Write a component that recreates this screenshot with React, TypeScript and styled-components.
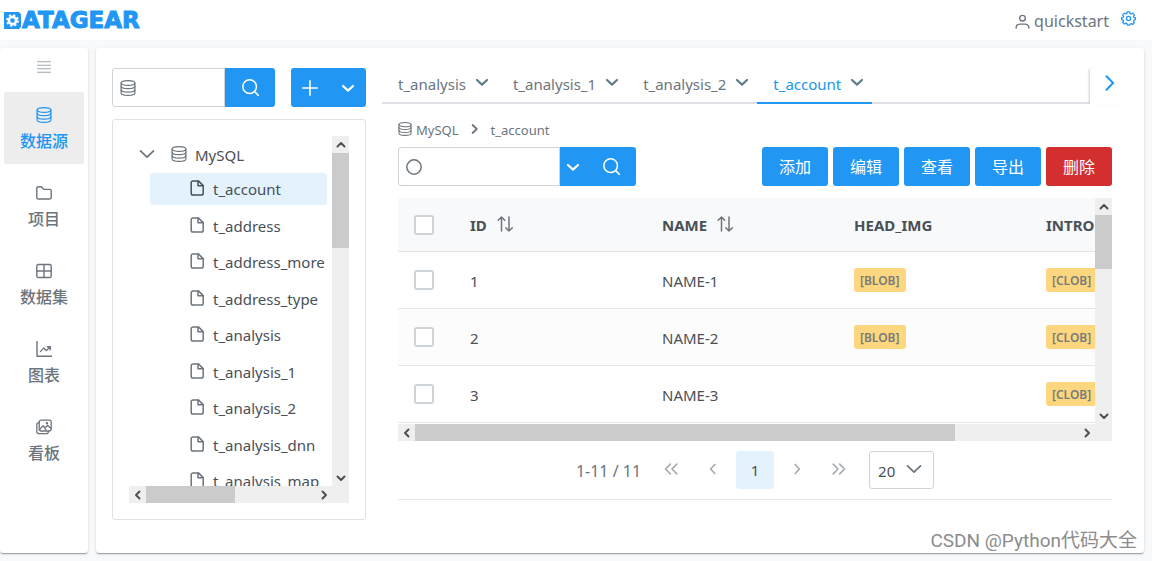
import React from 'react';
import styled, { createGlobalStyle, css } from 'styled-components';

const blue = '#2196f3';
const text = '#495057';
const muted = '#6c757d';
const line = '#dee2e6';
const field = '#ced4da';

const GlobalStyle = createGlobalStyle`
  *, *::before, *::after { box-sizing: border-box; }
  body {
    margin: 0;
    background: #f8f9fb;
    color: ${text};
    font: 15px/20px "Noto Sans", "Noto Sans CJK SC", sans-serif;
  }
  button, input, select { font: inherit; color: inherit; }
  button { border: 0; padding: 0; background: none; cursor: pointer; }
  ul, ol { list-style: none; margin: 0; padding: 0; }
  a { color: inherit; text-decoration: none; }
`;

/* ---------- icons ---------- */

const Svg = styled.svg`
  display: block;
  flex: none;
  fill: none;
  stroke: currentColor;
  stroke-linecap: round;
  stroke-linejoin: round;
`;

type IconProps = { size?: number; weight?: number };

const icon = (body: React.ReactNode, defaultWeight = 1.2) =>
  ({ size = 16, weight = defaultWeight }: IconProps) => (
    <Svg width={size} height={size} viewBox="0 0 16 16" strokeWidth={weight} aria-hidden="true">
      {body}
    </Svg>
  );

const DatabaseIcon = icon(
  <>
    <ellipse cx="8" cy="3" rx="6.900" ry="2.400" />
    <path d="M1.100 3v9.900c0 1.300 3.100 2.400 6.900 2.400s6.900-1.100 6.900-2.400V3" />
    <path d="M1.100 6c0 1.500 3.100 2.600 6.900 2.600s6.900-1.100 6.900-2.600M1.100 9.500c0 1.500 3.100 2.600 6.900 2.600s6.900-1.100 6.900-2.600" />
  </>,
);
const FolderIcon = icon(
  <path d="M.8 12.600V3.200c0-.8.6-1.400 1.400-1.400h3.300l2.300 2.600h6c.8 0 1.400.6 1.400 1.400v6.800c0 .8-.6 1.400-1.400 1.400H2.200c-.8 0-1.400-.6-1.400-1.400z" />, 1.4,
);
const GridIcon = icon(<><rect x=".8" y="1.500" width="14.400" height="13" rx="1.600" /><path d="M8 1.500v13M.8 8h14.400" /></>, 1.4);
const ChartIcon = icon(<><path d="M1 .6v14.600h14.600" /><path d="M4.400 10.600l3.200-3.500 2.800 2.500L14.200 6M11.300 5.800h3v3" /></>, 1.4);
const ImagesIcon = icon(
  <>
    <rect x="3.200" y="1.200" width="12" height="10.800" rx="1.800" />
    <path d="M3 3.600C1.500 3.700.8 4.500.8 5.800v6.400c0 1.600.9 2.500 2.500 2.500h7c1.300 0 2.100-.7 2.300-2.500" />
    <path d="M3.400 10.800l3.700-4.200 3 4.400M8.600 8.800l3-2.400 3.500 3.200" />
    <circle cx="11" cy="4.300" r=".6" />
  </>, 1.3,
);
const SearchIcon = icon(<><circle cx="7.200" cy="7.200" r="6.400" /><path d="M11.900 11.900l3.500 3.500" /></>, 1.4);
const PlusIcon = icon(<path d="M8 .8v14.400M.8 8h14.400" />, 1.6);
const CaretIcon = icon(<path d="M3 6l5 4.600L13 6" />, 2.2);
const ChevronDownIcon = icon(<path d="M1.500 4.800L8 11.200l6.500-6.400" />, 1.7);
const ChevronRightIcon = icon(<path d="M5.500 1.200L12.100 8 5.500 14.800" />, 2);
const CrumbIcon = icon(<path d="M5.600 4l4.200 4-4.200 4" />, 1.8);
const FileIcon = icon(
  <><path d="M4 .9h5.400l4.800 4.700v7.700c0 1-.7 1.800-1.800 1.800H4c-1 0-1.800-.7-1.800-1.800V2.700C2.200 1.700 3 .9 4 .9z" /><path d="M9 1.200v4.600h5" /></>, 1.5,
);
const CircleIcon = icon(<circle cx="8" cy="8" r="7.200" />, 1.5);
const SortIcon = icon(<path d="M4.500 15V1M1.200 4.200L4.500 1l3.200 3.200M12 1v14M8.800 11.800L12 15l3.300-3.200" />, 1.5);
const UserIcon = icon(<><circle cx="8" cy="4.500" r="3" /><path d="M1.200 15c0-2.900 2-4.200 4.200-4.200h5.200c2.200 0 4.200 1.300 4.200 4.200" /></>, 1.5);
const BarsIcon = icon(<path d="M.5 2h15M.5 6h15M.5 10h15M.5 14h15" />, 1.1);
const AngleLeftIcon = icon(<path d="M9.800 3.500L5.600 8l4.200 4.500" />, 1.7);
const AngleRightIcon = icon(<path d="M6.200 3.500L10.400 8l-4.200 4.500" />, 1.7);
const AnglesLeftIcon = icon(<path d="M7.300 3.200L2.500 8l4.800 4.800M13.800 3.200L9 8l4.800 4.800" />, 1.7);
const AnglesRightIcon = icon(<path d="M2.200 3.200L7 8l-4.800 4.800M8.700 3.200L13.500 8l-4.800 4.800" />, 1.7);
const GearIcon = icon(
  <>
    <path d="M6.700 1h2.600l.4 1.700 1.100.5 1.600-.9 1.800 1.800-.9 1.500.5 1.200 1.600.4v1.900l-1.600.9-.5 1.100.9 1.500-1.800 1.800-1.600-.9-1.100.5L9.300 15H6.700l-.4-1.500-1.100-.5-1.600.9-1.800-1.800.9-1.500-.5-1.100L.7 9.100V7.200l1.500-.4.5-1.200-.9-1.500 1.800-1.800 1.600.9 1.100-.5z" />
    <circle cx="8" cy="8" r="2.200" />
  </>, 1.4,
);

/* ---------- page frame ---------- */

const Page = styled.div`
  display: flex;
  flex-direction: column;
  height: 100vh;
  min-height: 480px;
`;

const Header = styled.header`
  display: flex;
  align-items: center;
  justify-content: space-between;
  height: 40px;
  flex: none;
  padding: 0 16px 0 4px;
  background: #fff;
`;

const Logo = styled.a`
  && { color: ${blue}; }
  display: flex;
  align-items: center;
  gap: 1px;
  font: bold 23px/24px "DejaVu Sans", sans-serif;
  -webkit-text-stroke: 1px ${blue};
`;

const UserArea = styled.div`
  display: flex;
  align-items: center;
  gap: 12px;
  color: ${muted};
`;

const UserName = styled.span`
  display: flex;
  align-items: center;
  gap: 4px;
  padding-top: 2px;
  font-size: 16px;
`;

const GearButton = styled.button`
  color: ${blue};
  padding-bottom: 3px;
`;

const Body = styled.div`
  display: flex;
  flex: 1;
  min-height: 0;
  gap: 8px;
  padding: 8px 8px 8px 0;
`;

const cardStyle = css`
  background: #fff;
  border-radius: 3px;
  box-shadow: 0 2px 1px -1px rgba(0, 0, 0, 0.2), 0 1px 1px rgba(0, 0, 0, 0.14),
    0 1px 3px rgba(0, 0, 0, 0.12);
`;

const Sidebar = styled.nav`
  ${cardStyle}
  flex: none;
  width: 88px;
  padding: 12px 4px;
`;

const MenuToggle = styled.button`
  display: flex;
  justify-content: center;
  width: 100%;
  height: 14px;
  margin-bottom: 18px;
  color: #9aa5ab;
`;

const NavList = styled.ul`
  display: flex;
  flex-direction: column;
  gap: 6px;
`;

const NavLink = styled.a<{ $active?: boolean }>`
  && { color: ${(p) => (p.$active ? blue : muted)}; }
  display: flex;
  flex-direction: column;
  align-items: center;
  gap: 8px;
  height: 72px;
  padding-top: 15px;
  border-radius: 3px;
  background: ${(p) => (p.$active ? '#ededed' : 'transparent')};
  font-size: 16px;
  font-weight: 500;
`;

const Main = styled.main`
  ${cardStyle}
  display: flex;
  flex: 1;
  min-width: 0;
  gap: 16px;
  padding: 20px 16px 33px;
`;

/* ---------- shared controls ---------- */

const Field = styled.label<{ $grow?: boolean }>`
  display: flex;
  align-items: center;
  flex: ${(p) => (p.$grow ? '1' : 'none')};
  width: ${(p) => (p.$grow ? 'auto' : '162px')};
  min-width: 0;
  height: 39px;
  padding-left: 7px;
  border: 1px solid ${field};
  border-radius: 3px 0 0 3px;
  color: ${muted};
`;

const TextInput = styled.input`
  flex: 1;
  min-width: 0;
  height: 100%;
  padding: 0 8px;
  border: 0;
  outline: 0;
  background: none;
`;

const ButtonGroup = styled.div`
  display: flex;
  flex: none;
  overflow: hidden;
  border-radius: 3px;
`;

const JoinedGroup = styled(ButtonGroup)`
  border-radius: 0 3px 3px 0;
`;

const IconButton = styled.button<{ $width: number }>`
  display: flex;
  align-items: center;
  justify-content: center;
  width: ${(p) => p.$width}px;
  height: 39px;
  background: ${blue};
  color: #fff;
`;

const ActionButton = styled.button<{ $danger?: boolean }>`
  width: 66px;
  height: 39px;
  border-radius: 3px;
  background: ${(p) => (p.$danger ? '#d32f2f' : blue)};
  color: #fff;
  font-size: 16px;
`;

/* ---------- scrolling panes ---------- */

const ScrollGrid = styled.div`
  display: grid;
  grid-template-columns: minmax(0, 1fr) 17px;
  grid-template-rows: minmax(0, 1fr) 17px;
  min-height: 0;
`;

const Viewport = styled.div`
  overflow: hidden;
`;

const Track = styled.div<{ $vertical?: boolean }>`
  display: flex;
  flex-direction: ${(p) => (p.$vertical ? 'column' : 'row')};
  background: #efefef;
  color: #505050;
`;

const ArrowButton = styled.button<{ $end?: boolean; $vertical?: boolean }>`
  display: flex;
  align-items: center;
  justify-content: center;
  flex: none;
  width: 17px;
  height: 17px;
  ${(p) => p.$end && (p.$vertical ? 'margin-top: auto;' : 'margin-left: auto;')}
`;

const Thumb = styled.div<{ $share: number }>`
  flex: 0 0 ${(p) => p.$share}%;
  background: #cbcbcb;
`;

const Corner = styled.div`
  background: #efefef;
`;

const arrows = {
  up: 'M1.500 6.500L5 3l3.500 3.500',
  down: 'M1.500 3.500L5 7l3.500-3.500',
  left: 'M6.500 1.500L3 5l3.500 3.500',
  right: 'M3.500 1.500L7 5 3.500 8.500',
};

const Arrow = ({ dir }: { dir: keyof typeof arrows }) => (
  <Svg width="10" height="10" viewBox="0 0 10 10" strokeWidth="2" aria-hidden="true">
    <path d={arrows[dir]} />
  </Svg>
);

function ScrollPane({ v, h, children }: { v: number; h: number; children: React.ReactNode }) {
  return (
    <>
      <Viewport>{children}</Viewport>
      <Track $vertical>
        <ArrowButton aria-label="up"><Arrow dir="up" /></ArrowButton>
        <Thumb $share={v} />
        <ArrowButton $end $vertical aria-label="down"><Arrow dir="down" /></ArrowButton>
      </Track>
      <Track>
        <ArrowButton aria-label="left"><Arrow dir="left" /></ArrowButton>
        <Thumb $share={h} />
        <ArrowButton $end aria-label="right"><Arrow dir="right" /></ArrowButton>
      </Track>
      <Corner />
    </>
  );
}

/* ---------- schema tree ---------- */

const TreeColumn = styled.section`
  display: flex;
  flex-direction: column;
  flex: none;
  width: 25%;
  gap: 12px;
  min-width: 0;
  min-height: 0;
`;

const TreeTools = styled.div`
  display: flex;
  gap: 16px;
`;

const SearchBox = styled.form`
  display: flex;
  flex: 1;
  min-width: 0;
`;

const TreeScroll = styled(ScrollGrid)`
  flex: 1;
  border: 1px solid ${line};
  border-radius: 3px;
  padding: 16px;
`;

const TreeRoot = styled.button`
  display: flex;
  align-items: center;
  width: 100%;
  height: 37px;
  padding: 0 10px 2px;
  color: ${muted};
`;

const RootLabel = styled.span`
  padding-top: 3px;
  margin-left: 8px;
  color: ${text};
`;

const RootIcon = styled.span`
  margin-left: 16px;
`;

const TreeItems = styled.ul`
  padding: 0 5px 0 21px;
`;

const TreeItem = styled.li`
  margin-bottom: 5px;
  &:nth-child(even) { margin-bottom: 4px; }
`;

const TreeNode = styled.button<{ $active?: boolean }>`
  display: flex;
  align-items: center;
  gap: 8px;
  width: 100%;
  height: 32px;
  padding-left: 39px;
  border-radius: 3px;
  background: ${(p) => (p.$active ? '#e3f2fd' : 'transparent')};
  white-space: nowrap;
  svg { color: ${(p) => (p.$active ? text : muted)}; margin-bottom: 2px; }
`;

/* ---------- tabs and breadcrumb ---------- */

const Work = styled.section`
  display: flex;
  flex-direction: column;
  flex: 1;
  min-width: 0;
`;

const TabBar = styled.div`
  display: flex;
  height: 36px;
`;

const Tabs = styled.div`
  display: flex;
  flex: 1;
  min-width: 0;
  overflow: hidden;
  box-shadow: inset 0 -2px 0 ${line};
`;

const Tab = styled.div<{ $active?: boolean }>`
  display: flex;
  align-items: center;
  gap: 8px;
  padding: 0 7px 2px 16px;
  border-bottom: 2px solid ${(p) => (p.$active ? blue : 'transparent')};
  color: ${(p) => (p.$active ? blue : muted)};
`;

const TabMenu = styled.button`
  color: #607d8b;
  padding-bottom: 4px;
`;

const TabNext = styled.button`
  display: flex;
  align-items: center;
  justify-content: center;
  width: 38px;
  padding-bottom: 6px;
  color: ${blue};
  box-shadow: -2px 0 2px -1px rgba(0, 0, 0, 0.2);
`;

const Content = styled.div`
  display: flex;
  flex-direction: column;
  padding: 16px 16px 0;
`;

const Crumbs = styled.ol`
  display: flex;
  align-items: center;
  height: 20px;
  color: ${muted};
  font-size: 13px;
`;

const Crumb = styled.li`
  display: flex;
  align-items: center;
  gap: 4px;
  svg { margin-bottom: 2px; }
`;

const CrumbDivider = styled.li`
  margin: 0 8px 2px;
`;

const Toolbar = styled.div`
  display: flex;
  justify-content: space-between;
  margin: 7px 0 12px;
`;

const Query = styled.form`
  display: flex;
`;

const Actions = styled.div`
  display: flex;
  gap: 5px;
`;

/* ---------- data table ---------- */

const TableScroll = styled(ScrollGrid)`
  height: 243px;
`;

const Table = styled.table`
  width: 1016px;
  table-layout: fixed;
  border-collapse: separate;
  border-spacing: 0;
  text-align: left;
`;

const Check = styled.input`
  appearance: none;
  display: block;
  width: 20px;
  height: 20px;
  margin: 0 0 2px;
  border: 2px solid ${field};
  border-radius: 3px;
  background: #fff;
`;

const Th = styled.th<{ $width: number }>`
  width: ${(p) => p.$width}px;
  height: 54px;
  padding: 0 16px;
  border-bottom: 1px solid #e4e7ea;
  background: #f8f9fa;
  font-weight: 700;
  ${Check} { margin: 0; }
`;

const ThInner = styled.span`
  display: flex;
  align-items: center;
  gap: 10px;
  svg { color: ${muted}; margin-bottom: 2px; }
`;

const Row = styled.tr`
  &:nth-child(even) td { background: #fcfcfc; }
`;

const Td = styled.td`
  height: 57px;
  padding: 2px 16px 0;
  border-bottom: 1px solid #e4e7ea;
`;

const Tag = styled.span`
  display: flex;
  align-items: center;
  width: 52px;
  height: 24px;
  margin-bottom: 2px;
  padding: 2px 0 0 6px;
  border-radius: 3px;
  background: #fcd77f;
  color: #7b7b78;
  font-size: 12px;
  font-weight: 600;
  white-space: nowrap;
`;

/* ---------- paginator ---------- */

const Paginator = styled.nav`
  display: flex;
  align-items: center;
  justify-content: center;
  gap: 4px;
  height: 59px;
  border-bottom: 1px solid #e4e7ea;
  color: ${muted};
`;

const Range = styled.span`
  margin-right: 7px;
  padding-top: 2px;
  font-size: 16px;
`;

const PageButton = styled.button<{ $active?: boolean }>`
  display: flex;
  align-items: center;
  justify-content: center;
  width: 38px;
  height: 38px;
  border-radius: 3px;
  background: ${(p) => (p.$active ? '#e3f2fd' : 'transparent')};
  color: ${(p) => (p.$active ? text : '#a7acb1')};
  padding-bottom: ${(p) => (p.$active ? '0' : '3px')};
`;

const SizeBox = styled.label`
  display: flex;
  align-items: center;
  width: 65px;
  height: 38px;
  margin-left: 7px;
  border: 1px solid ${field};
  border-radius: 3px;
  svg { pointer-events: none; margin: 0 11px 3px 0; }
`;

const SizeSelect = styled.select`
  appearance: none;
  flex: 1;
  min-width: 0;
  height: 100%;
  padding: 2px 0 0 8px;
  border: 0;
  outline: 0;
  background: none;
  color: ${text};
`;

const Watermark = styled.div`
  position: absolute;
  right: 15px;
  bottom: 8px;
  color: #8c8c8c;
  font: 400 19px/24px Roboto, "Noto Sans CJK SC", sans-serif;
  text-shadow: 1px 1px 1px #fff;
  pointer-events: none;
`;

/* ---------- data ---------- */

const navItems = [
  { label: '数据源', Icon: DatabaseIcon, active: true },
  { label: '项目', Icon: FolderIcon },
  { label: '数据集', Icon: GridIcon },
  { label: '图表', Icon: ChartIcon },
  { label: '看板', Icon: ImagesIcon },
];

const tables = [
  't_account', 't_address', 't_address_more', 't_address_type', 't_analysis',
  't_analysis_1', 't_analysis_2', 't_analysis_dnn', 't_analysis_map',
];

const tabs = ['t_analysis', 't_analysis_1', 't_analysis_2', 't_account'];

const rows = [
  { id: 1, name: 'NAME-1', blob: true },
  { id: 2, name: 'NAME-2', blob: true },
  { id: 3, name: 'NAME-3', blob: false },
];

const actions = ['添加', '编辑', '查看', '导出'];

export default function App() {
  return (
    <>
      <GlobalStyle />
      <Page>
        <Header>
          <Logo href="#" aria-label="DATAGEAR">
            <svg width="17" height="17" viewBox="0 0 16 16" aria-hidden="true">
              <path d="M0 0h14l2 2v12l-2 2H0z" fill={blue} />
              <circle cx="8" cy="8" r="3.400" fill="none" stroke="#fff" strokeWidth="2.400" />
              <circle cx="8" cy="8" r="5.200" fill="none" stroke="#fff" strokeWidth="1.600" strokeDasharray="2.042 2.042" />
            </svg>
            ATAGEAR
          </Logo>
          <UserArea>
            <UserName><UserIcon size={15} />quickstart</UserName>
            <GearButton aria-label="settings"><GearIcon size={15} /></GearButton>
          </UserArea>
        </Header>

        <Body>
          <Sidebar>
            <MenuToggle aria-label="menu"><BarsIcon size={14} /></MenuToggle>
            <NavList>
              {navItems.map(({ label, Icon, active }) => (
                <li key={label}>
                  <NavLink href="#" $active={active}><Icon size={16} />{label}</NavLink>
                </li>
              ))}
            </NavList>
          </Sidebar>

          <Main>
            <TreeColumn>
              <TreeTools>
                <SearchBox>
                  <Field $grow>
                    <DatabaseIcon />
                    <TextInput aria-label="search" />
                  </Field>
                  <JoinedGroup>
                    <IconButton $width={50} type="button" aria-label="search"><SearchIcon size={17} /></IconButton>
                  </JoinedGroup>
                </SearchBox>
                <ButtonGroup>
                  <IconButton $width={38} aria-label="add"><PlusIcon /></IconButton>
                  <IconButton $width={37} aria-label="more"><CaretIcon /></IconButton>
                </ButtonGroup>
              </TreeTools>
              <TreeScroll>
                <ScrollPane v={27} h={44}>
                  <TreeRoot>
                    <ChevronDownIcon />
                    <RootIcon><DatabaseIcon /></RootIcon>
                    <RootLabel>MySQL</RootLabel>
                  </TreeRoot>
                  <TreeItems>
                    {tables.map((name, i) => (
                      <TreeItem key={name}>
                        <TreeNode $active={i === 0}><FileIcon />{name}</TreeNode>
                      </TreeItem>
                    ))}
                  </TreeItems>
                </ScrollPane>
              </TreeScroll>
            </TreeColumn>

            <Work>
              <TabBar>
                <Tabs>
                  {tabs.map((name) => (
                    <Tab key={name} $active={name === 't_account'}>
                      <span>{name}</span>
                      <TabMenu aria-label={name}><CaretIcon /></TabMenu>
                    </Tab>
                  ))}
                </Tabs>
                <TabNext aria-label="next"><ChevronRightIcon /></TabNext>
              </TabBar>

              <Content>
                <Crumbs>
                  <Crumb><DatabaseIcon size={14} />MySQL</Crumb>
                  <CrumbDivider><CrumbIcon /></CrumbDivider>
                  <Crumb>t_account</Crumb>
                </Crumbs>

                <Toolbar>
                  <Query>
                    <Field>
                      <CircleIcon />
                      <TextInput aria-label="query" />
                    </Field>
                    <JoinedGroup>
                      <IconButton $width={26} type="button" aria-label="options"><CaretIcon /></IconButton>
                      <IconButton $width={50} type="button" aria-label="query"><SearchIcon size={17} /></IconButton>
                    </JoinedGroup>
                  </Query>
                  <Actions>
                    {actions.map((label) => <ActionButton key={label}>{label}</ActionButton>)}
                    <ActionButton $danger>删除</ActionButton>
                  </Actions>
                </Toolbar>

                <TableScroll>
                  <ScrollPane v={24} h={77.5}>
                    <Table>
                      <thead>
                        <tr>
                          <Th $width={56}><Check type="checkbox" aria-label="all" /></Th>
                          <Th $width={192}><ThInner>ID<SortIcon /></ThInner></Th>
                          <Th $width={192}><ThInner>NAME<SortIcon /></ThInner></Th>
                          <Th $width={192}>HEAD_IMG</Th>
                          <Th $width={384}>INTRO</Th>
                        </tr>
                      </thead>
                      <tbody>
                        {rows.map((row) => (
                          <Row key={row.id}>
                            <Td><Check type="checkbox" aria-label={row.name} /></Td>
                            <Td>{row.id}</Td>
                            <Td>{row.name}</Td>
                            <Td>{row.blob && <Tag>[BLOB]</Tag>}</Td>
                            <Td><Tag>[CLOB]</Tag></Td>
                          </Row>
                        ))}
                      </tbody>
                    </Table>
                  </ScrollPane>
                </TableScroll>

                <Paginator>
                  <Range>1-11 / 11</Range>
                  <PageButton aria-label="first"><AnglesLeftIcon /></PageButton>
                  <PageButton aria-label="previous"><AngleLeftIcon /></PageButton>
                  <PageButton $active>1</PageButton>
                  <PageButton aria-label="next"><AngleRightIcon /></PageButton>
                  <PageButton aria-label="last"><AnglesRightIcon /></PageButton>
                  <SizeBox>
                    <SizeSelect aria-label="rows"><option>20</option></SizeSelect>
                    <ChevronDownIcon />
                  </SizeBox>
                </Paginator>
              </Content>
            </Work>
          </Main>
        </Body>
      </Page>
      <Watermark>CSDN @Python代码大全</Watermark>
    </>
  );
}
